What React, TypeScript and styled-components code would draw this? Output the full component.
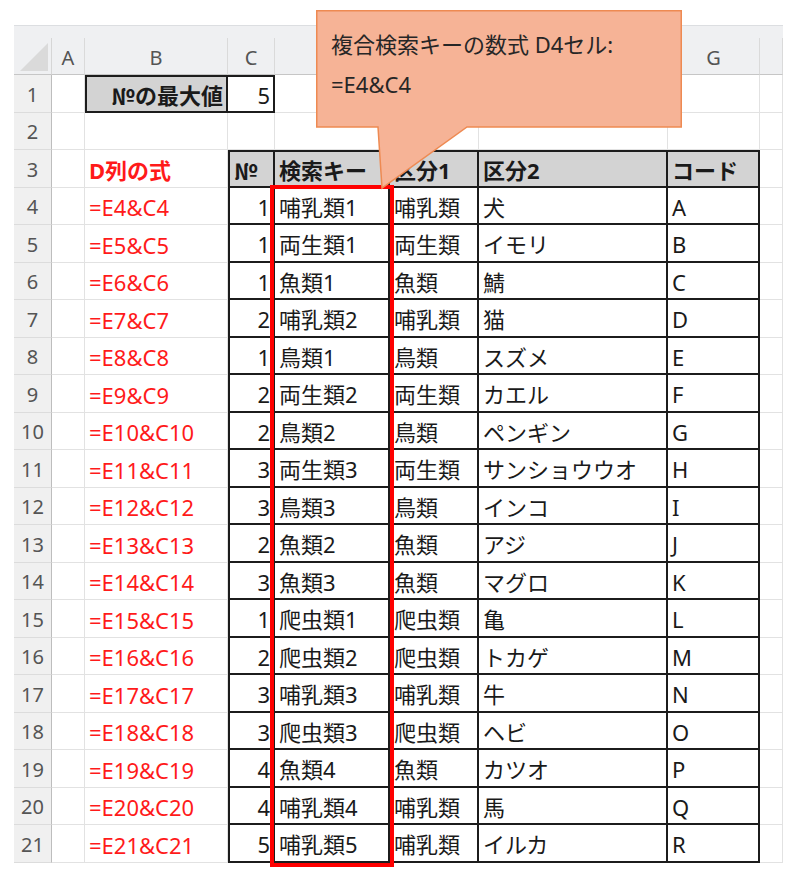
import React from "react";
import styled, { createGlobalStyle, css } from "styled-components";

const GlobalStyle = createGlobalStyle`
  html, body { margin: 0; padding: 0; background: #ffffff; }
  body { font-family: "Noto Sans", "Noto Sans CJK JP", sans-serif; }
`;

const CELL_FONT = `"Noto Sans", "Noto Sans CJK JP", sans-serif`;

const Page = styled.div`
  position: relative;
  width: 799px;
  height: 874px;
  overflow: hidden;
  background: #fff;
`;

const Sheet = styled.div`
  position: relative;
  display: grid;
  grid-template-columns: 38px 33px 143px 47px 115px 89px 189px 92px 23px;
  grid-template-rows: 13px 37px repeat(21, 37.5px);
  width: 769px;
  margin: 25px 0 0 14px;
`;

const TopStrip = styled.div`
  grid-column: 1 / -1;
  background: #eff0f2;
  border-top: 1px solid #dcdee1;
`;

const Corner = styled.div`
  position: relative;
  background: #eff0f2;
  border-right: 1px solid #d6d6d6;
  border-bottom: 1px solid #c6c6c6;
  &::after {
    content: "";
    position: absolute;
    left: 6px;
    top: 5px;
    width: 28px;
    height: 28px;
    background: #dadada;
    clip-path: polygon(100% 0, 100% 100%, 0 100%);
  }
`;

const ColHead = styled.div`
  display: flex;
  align-items: center;
  justify-content: center;
  background: #eff0f2;
  border-right: 1px solid #dadada;
  border-bottom: 1px solid #c6c6c6;
  font-family: "Noto Sans", sans-serif;
  font-size: 20px;
  color: #545454;
  padding-top: 2px;
  box-sizing: border-box;
`;

const RowHead = styled.div`
  display: flex;
  align-items: center;
  justify-content: center;
  background: #f0f0f0;
  border-right: 1px solid #bdbdbd;
  border-bottom: 1px solid #dcdcdc;
  font-family: "Noto Sans", sans-serif;
  font-size: 20px;
  color: #555;
  padding-top: 2px;
  box-sizing: border-box;
`;

type CellProps = {
  $boxed?: boolean;
  $top?: boolean;
  $left?: boolean;
  $fill?: boolean;
  $align?: "left" | "right";
  $bold?: boolean;
  $red?: boolean;
};

const Cell = styled.div<CellProps>`
  display: flex;
  align-items: center;
  justify-content: ${(p) => (p.$align === "right" ? "flex-end" : "flex-start")};
  box-sizing: border-box;
  padding: 3px ${(p) => (p.$align === "right" ? "3px" : "0")} 0
    ${(p) => (p.$align === "right" ? "0" : "4px")};
  white-space: nowrap;
  overflow: visible;
  font-family: ${CELL_FONT};
  font-size: 22px;
  line-height: 1;
  font-weight: ${(p) => (p.$bold ? 700 : 400)};
  color: ${(p) => (p.$red ? "#ff1a1a" : "#1a1a1a")};
  background: ${(p) => (p.$fill ? "#d3d3d3" : "#ffffff")};
  border-right: 1px solid #e2e2e2;
  border-bottom: 1px solid #e2e2e2;
  ${(p) =>
    p.$boxed &&
    css`
      border-right: 2px solid #1c1c1c;
      border-bottom: 2px solid #1c1c1c;
    `}
  ${(p) =>
    p.$top &&
    css`
      border-top: 2px solid #1c1c1c;
    `}
  ${(p) =>
    p.$left &&
    css`
      border-left: 2px solid #1c1c1c;
    `}
`;

const Numero = styled.span`
  font-family: "Noto Sans CJK JP", sans-serif;
`;

/* Red selection frame laid over D4:D21 (absolute inside its grid area) */
const Highlight = styled.div`
  grid-column: 5 / 6;
  grid-row: 6 / 24;
  position: absolute;
  top: -3px;
  left: -5px;
  right: -4px;
  bottom: -4px;
  border: 4px solid #ff0000;
  z-index: 2;
  pointer-events: none;
`;

const Callout = styled.div`
  position: absolute;
  left: 316px;
  top: 10px;
  width: 366px;
  height: 180px;
  z-index: 3;
`;

const CalloutShape = styled.svg`
  position: absolute;
  left: 0;
  top: 0;
  overflow: visible;
`;

const CalloutText = styled.div`
  position: relative;
  padding: 14px 0 0 15px;
  font-family: ${CELL_FONT};
  font-size: 22px;
  line-height: 40px;
  color: #262626;
`;

type Row = [number, string, string, string, string];

const DATA: Row[] = [
  [1, "哺乳類1", "哺乳類", "犬", "A"],
  [1, "両生類1", "両生類", "イモリ", "B"],
  [1, "魚類1", "魚類", "鯖", "C"],
  [2, "哺乳類2", "哺乳類", "猫", "D"],
  [1, "鳥類1", "鳥類", "スズメ", "E"],
  [2, "両生類2", "両生類", "カエル", "F"],
  [2, "鳥類2", "鳥類", "ペンギン", "G"],
  [3, "両生類3", "両生類", "サンショウウオ", "H"],
  [3, "鳥類3", "鳥類", "インコ", "I"],
  [2, "魚類2", "魚類", "アジ", "J"],
  [3, "魚類3", "魚類", "マグロ", "K"],
  [1, "爬虫類1", "爬虫類", "亀", "L"],
  [2, "爬虫類2", "爬虫類", "トカゲ", "M"],
  [3, "哺乳類3", "哺乳類", "牛", "N"],
  [3, "爬虫類3", "爬虫類", "ヘビ", "O"],
  [4, "魚類4", "魚類", "カツオ", "P"],
  [4, "哺乳類4", "哺乳類", "馬", "Q"],
  [5, "哺乳類5", "哺乳類", "イルカ", "R"],
];

const COLS = ["A", "B", "C", "D", "E", "F", "G"];

export default function App() {
  return (
    <Page>
      <GlobalStyle />
      <Sheet>
        <TopStrip />
        <Corner />
        {COLS.map((c) => (
          <ColHead key={c}>{c}</ColHead>
        ))}
        <ColHead />

        {/* Row 1 */}
        <RowHead>1</RowHead>
        <Cell />
        <Cell $boxed $top $left $fill $bold $align="right">
          <Numero>№</Numero>の最大値
        </Cell>
        <Cell $boxed $top $align="right">
          5
        </Cell>
        <Cell />
        <Cell />
        <Cell />
        <Cell />
        <Cell />

        {/* Row 2 */}
        <RowHead>2</RowHead>
        <Cell />
        <Cell />
        <Cell />
        <Cell />
        <Cell />
        <Cell />
        <Cell />
        <Cell />

        {/* Row 3 */}
        <RowHead>3</RowHead>
        <Cell />
        <Cell $red $bold>
          D列の式
        </Cell>
        <Cell $boxed $top $left $fill $bold>
          <Numero>№</Numero>
        </Cell>
        <Cell $boxed $top $fill $bold>
          検索キー
        </Cell>
        <Cell $boxed $top $fill $bold>
          区分1
        </Cell>
        <Cell $boxed $top $fill $bold>
          区分2
        </Cell>
        <Cell $boxed $top $fill $bold>
          コード
        </Cell>
        <Cell />

        {DATA.map(([no, key, k1, k2, code], i) => {
          const r = i + 4;
          return (
            <React.Fragment key={r}>
              <RowHead>{r}</RowHead>
              <Cell />
              <Cell $red>{`=E${r}&C${r}`}</Cell>
              <Cell $boxed $left $align="right">
                {no}
              </Cell>
              <Cell $boxed>{key}</Cell>
              <Cell $boxed>{k1}</Cell>
              <Cell $boxed>{k2}</Cell>
              <Cell $boxed>{code}</Cell>
              <Cell />
            </React.Fragment>
          );
        })}

        <Highlight />
      </Sheet>

      <Callout>
        <CalloutShape width="366" height="180" viewBox="0 0 366 180">
          <path
            d="M0.75 0.75 H365.25 V117 H151 L66 178 L62 117 H0.75 Z"
            fill="#f6b396"
            stroke="#ee8a52"
            strokeWidth="1.5"
            strokeLinejoin="miter"
          />
        </CalloutShape>
        <CalloutText>
          <div>複合検索キーの数式 D4セル:</div>
          <div>=E4&amp;C4</div>
        </CalloutText>
      </Callout>
    </Page>
  );
}
